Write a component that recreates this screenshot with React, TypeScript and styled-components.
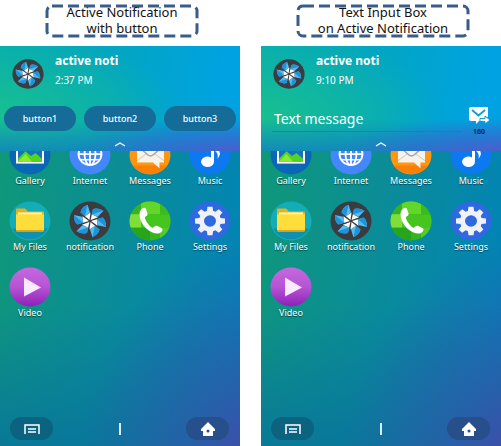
import React from 'react';
import styled, { createGlobalStyle } from 'styled-components';

const Global = createGlobalStyle`
  *, *::before, *::after { box-sizing: border-box; }
  body { margin: 0; background: #fff; font-family: "Noto Sans", "Open Sans", sans-serif; }
`;

const Page = styled.main`
  display: grid;
  grid-template-columns: 1fr 1fr;
  column-gap: 21px;
  min-height: 100vh;
`;

const Example = styled.section`
  display: flex;
  flex-direction: column;
`;

const CaptionRow = styled.header<{ $inset: number }>`
  display: flex;
  height: 46px;
  padding: 4px 0 9px ${p => p.$inset}px;
`;

const Caption = styled.h2<{ $width: number }>`
  position: relative;
  width: ${p => p.$width}px;
  margin: 0;
  color: #111;
  font-size: 13px;
  font-weight: 400;
  line-height: 16px;
  text-align: center;
  white-space: pre-line;
`;

const Dashes = styled.svg`
  position: absolute;
  inset: 0;
  width: 100%;
  height: 100%;
  overflow: visible;
`;

const CaptionText = styled.span`
  position: relative;
`;

const Phone = styled.div`
  position: relative;
  flex: 1;
  display: flex;
  flex-direction: column;
  overflow: hidden;
  color: #fff;
  background:
    radial-gradient(ellipse 75% 60% at 108% 108%, #4a45ac 0%, rgba(60, 80, 172, 0.6) 40%, rgba(20, 110, 180, 0) 100%),
    linear-gradient(to bottom, rgba(8, 115, 155, 0) 65%, #08739b 108%),
    linear-gradient(100deg, #109a74 0%, #0b8c98 48%, #0083b8 95%);
`;

const Notification = styled.section`
  position: absolute;
  top: 0;
  left: 0;
  right: 0;
  height: 105px;
  display: flex;
  flex-direction: column;
  background:
    radial-gradient(ellipse 80% 38% at 106% 106%, #5a55cf 0%, rgba(70, 95, 210, 0.6) 45%, rgba(40, 130, 215, 0) 100%),
    linear-gradient(to bottom, rgba(20, 125, 190, 0) 70%, rgba(20, 125, 190, 0.75) 100%),
    radial-gradient(ellipse 75% 80% at 0% 66%, #18bf90 0%, rgba(14, 178, 170, 0) 100%),
    linear-gradient(100deg, #06acb0 0%, #02a5c4 50%, #00a2e2 90%);
`;

const NotiHead = styled.div`
  display: flex;
  gap: 11px;
  height: 60px;
  padding: 6px 12px 0;
`;

const NotiIcon = styled.svg`
  width: 32px;
  height: 30px;
  margin-top: 7px;
`;

const NotiTitle = styled.h3`
  margin: 0;
  font-size: 12px;
  line-height: 18px;
  font-weight: 700;
`;

const NotiTime = styled.time`
  display: block;
  font-size: 10px;
  line-height: 20px;
`;

const ButtonRow = styled.div`
  display: grid;
  grid-template-columns: repeat(3, 1fr);
  gap: 8px;
  padding: 0 4px;
`;

const ActionButton = styled.button`
  height: 25px;
  padding: 0;
  border: 0;
  border-radius: 13px;
  background: #156c98;
  color: #fff;
  font: 500 9px/25px "Noto Sans", sans-serif;
`;

const InputRow = styled.form`
  display: flex;
  gap: 4px;
  padding: 0 9px 0 11px;
`;

const MessageInput = styled.input`
  flex: 1;
  min-width: 0;
  height: 26px;
  padding: 0 2px;
  border: 0;
  border-bottom: 1px solid #1685b4;
  outline: 0;
  background: none;
  color: #fff;
  font: 14px/20px "Noto Sans", sans-serif;
  &::placeholder { color: #fff; opacity: 1; }
`;

const SendButton = styled.button`
  display: flex;
  flex-direction: column;
  align-items: center;
  justify-content: flex-start;
  gap: 2px;
  width: 26px;
  height: 32px;
  padding: 0;
  border: 0;
  background: none;
  color: #06202c;
  font: 600 7px/10px "Noto Sans", sans-serif;
  svg { width: 22px; height: 19px; }
`;

const Collapse = styled.button`
  position: absolute;
  bottom: 0;
  left: 50%;
  width: 24px;
  height: 12px;
  margin-left: -12px;
  padding: 0;
  border: 0;
  background: none;
  svg { display: block; width: 24px; height: 12px; }
`;

const AppGrid = styled.ul`
  flex: 1;
  display: grid;
  grid-template-columns: repeat(4, 1fr);
  grid-auto-rows: 66px;
  margin: 0;
  padding: 89px 0 0;
  list-style: none;
`;

const AppLink = styled.a`
  display: flex;
  flex-direction: column;
  align-items: center;
  color: #fff;
  font-size: 9px;
  line-height: 11px;
  text-decoration: none;
  text-shadow: 0 1px 1px rgba(0, 30, 40, 0.7);
  svg { width: 42px; height: 40px; }
`;

const NavBar = styled.nav`
  display: flex;
  align-items: center;
  justify-content: space-between;
  padding: 0 11px 6px 10px;
`;

const NavButton = styled.button<{ $tone: string }>`
  display: grid;
  place-items: center;
  width: 43px;
  height: 23px;
  padding: 0;
  border: 0;
  border-radius: 12px;
  background: ${p => p.$tone};
  svg { width: 18px; height: 16px; }
`;

const Divider = styled.span`
  width: 2px;
  height: 12px;
  background: #d9eef5;
`;

const blades = [0, 60, 120, 180, 240, 300];

function Pinwheel() {
  return (
    <>
      <circle cx="21" cy="21" r="20.5" fill="#3b3c3f" />
      {blades.map(a => (
        <g key={a} transform={`rotate(${a} 21 21)`}>
          <path d="M18.500 4L21 12L16 16L11.500 12Q12.500 7 18.500 4Z" fill="#4fbcf4" />
          <path d="M18.500 4Q12.500 7 11.500 12L16 16Z" fill="#1f93da" />
          <path d="M20.500 20L16 16L21.500 12Z" fill="#fff" />
        </g>
      ))}
    </>
  );
}

function Gallery() {
  return (
    <>
      <circle cx="21" cy="21" r="20.500" fill="#0967b5" />
      <path d="M7 9H35V30H7Z" fill="#fff" />
      <path d="M9 11H33V28H9Z" fill="#176fc6" />
      <path d="M9 25L16.500 17L22 22L26.500 19L33 25V28H9Z" fill="#52d51f" />
      <path d="M9 28L16.500 20L23 28Z" fill="#8aeb32" />
      <circle cx="27.500" cy="15" r="2" fill="#f5d53a" />
    </>
  );
}

function Internet() {
  return (
    <>
      <circle cx="21" cy="21" r="20.500" fill="#4387fb" />
      <g fill="none" stroke="#fff" strokeWidth="1.800">
        <circle cx="21" cy="20" r="11.500" />
        <ellipse cx="21" cy="20" rx="5.500" ry="11.500" />
        <path d="M21 8.500V31.500M9.500 20H32.500M11.500 14H30.500M11.500 26H30.500" />
      </g>
    </>
  );
}

function Messages() {
  return (
    <>
      <circle cx="21" cy="21" r="20.500" fill="#ff960d" />
      <path d="M4 32A20.500 20.500 0 0 0 38 32Z" fill="#f97f05" />
      <path d="M8 10H35V29H30.500V35L24 29H8Z" fill="#f6f2ec" />
      <path d="M8 11L19 21Q21.500 23 24 21L35 11" fill="none" stroke="#aaa198" strokeWidth="1.500" />
      <path d="M8 27L17 20M35 27L26 20" fill="none" stroke="#d0c8be" strokeWidth="1" />
    </>
  );
}

function Music() {
  return (
    <>
      <circle cx="21" cy="21" r="20.500" fill="#0d78ef" />
      <path d="M22 7H25V28A6.500 5.500 0 1 1 22 23.500Z" fill="#fff" />
      <path d="M25 7Q26 13 29 15Q33 19 28.500 25Q30 19 25 16Z" fill="#fff" />
    </>
  );
}

function Files() {
  return (
    <>
      <circle cx="21" cy="21" r="20.500" fill="#13adb8" />
      <path d="M3 29A20 20 0 0 0 39 29Z" fill="#108fae" />
      <path d="M7 9Q7 8 8 8H16L19 11H34Q35 11 35 12V31H7Z" fill="#e3b223" />
      <path d="M9 12H33V16H9Z" fill="#fff5bd" />
      <path d="M7 14H35V31Q35 32 34 32H8Q7 32 7 31Z" fill="#ffdd3b" />
      <path d="M7 31H35" stroke="#d5a81e" strokeWidth="1" />
    </>
  );
}

function PhoneIcon({ id }: { id: string }) {
  return (
    <>
      <clipPath id={id}><circle cx="21" cy="21" r="20.500" /></clipPath>
      <g clipPath={`url(#${id})`}>
        <path d="M0 0H42V42H0Z" fill="#35b51d" />
        <path d="M12 0H31V14H12Z" fill="#63d62a" />
        <path d="M0 14H12V28H0Z" fill="#80de3b" />
        <path d="M12 14H42V28H12Z" fill="#46c51f" />
        <path d="M31 0H42V14H31Z" fill="#3dba20" />
        <path d="M0 28H21V42H0Z" fill="#28a41d" />
        <path d="M31 28H42V42H31Z" fill="#55cb25" />
      </g>
      <path d="M15 7Q11 8 10.500 13Q10.500 22 17 28.500Q24 35 30 34Q33 33 33.500 30.500Q34 29 32 28L28 26Q26 25.500 24.500 27.500Q23.500 29 21 26.500Q17 22.500 16 18.500Q15.500 16.500 17 16Q19 15 18.500 13L17 8.500Q16.500 7 15 7Z" fill="#fff" />
    </>
  );
}

const teeth = [0, 45, 90, 135, 180, 225, 270, 315];

function Settings() {
  return (
    <>
      <circle cx="21" cy="21" r="20.500" fill="#2f69df" />
      {teeth.map(a => (
        <path key={a} d="M18.500 6H23.500L24.500 13H17.500Z" fill="#f0f2f7" transform={`rotate(${a} 21 21)`} />
      ))}
      <circle cx="21" cy="21" r="8.500" fill="none" stroke="#f0f2f7" strokeWidth="5" />
    </>
  );
}

function Video({ id }: { id: string }) {
  return (
    <>
      <linearGradient id={id} x1="0" y1="0" x2="0" y2="1">
        <stop offset="0" stopColor="#c569df" />
        <stop offset="0.500" stopColor="#b654d4" />
        <stop offset="1" stopColor="#8d20b8" />
      </linearGradient>
      <circle cx="21" cy="21" r="20.500" fill={`url(#${id})`} />
      <path d="M15 11L32 21.500L15 31Z" fill="#fbeaff" />
    </>
  );
}

function HomeScreen({ name, time, children }: { name: string; time: string; children: React.ReactNode }) {
  const apps: [string, React.ReactNode][] = [
    ['Gallery', <Gallery />],
    ['Internet', <Internet />],
    ['Messages', <Messages />],
    ['Music', <Music />],
    ['My Files', <Files />],
    ['notification', <Pinwheel />],
    ['Phone', <PhoneIcon id={`${name}-phone`} />],
    ['Settings', <Settings />],
    ['Video', <Video id={`${name}-video`} />],
  ];
  return (
    <Phone>
      <AppGrid>
        {apps.map(([label, icon]) => (
          <li key={label}>
            <AppLink href="#">
              <svg viewBox="0 0 42 42" preserveAspectRatio="none" aria-hidden="true">{icon}</svg>
              {label}
            </AppLink>
          </li>
        ))}
      </AppGrid>
      <NavBar>
        <NavButton $tone="#0c637f" aria-label="Menu">
          <svg viewBox="0 0 18 16" fill="none" stroke="#fff">
            <path d="M2 13V4H16V13" strokeWidth="1.500" />
            <path d="M5 8H13M5 11H13" strokeWidth="1.500" />
          </svg>
        </NavButton>
        <Divider />
        <NavButton $tone="#264f8b" aria-label="Home">
          <svg viewBox="0 0 18 16"><path d="M9 1L16 8V10H14V15H4V10H2V8Z" fill="#fff" /><circle cx="9" cy="10" r="1.500" fill="#264f8b" /></svg>
        </NavButton>
      </NavBar>
      <Notification>
        <NotiHead>
          <NotiIcon viewBox="0 0 42 42" preserveAspectRatio="none" aria-hidden="true"><Pinwheel /></NotiIcon>
          <div>
            <NotiTitle>active noti</NotiTitle>
            <NotiTime>{time}</NotiTime>
          </div>
        </NotiHead>
        {children}
        <Collapse aria-label="Collapse">
          <svg viewBox="0 0 24 12" fill="none" stroke="#fff" strokeWidth="1.200"><path d="M7 7L12 4L17 7" /></svg>
        </Collapse>
      </Notification>
    </Phone>
  );
}

function Label({ width, children }: { width: number; children: React.ReactNode }) {
  return (
    <Caption $width={width}>
      <Dashes aria-hidden="true">
        <rect x="2" y="2" width={width - 4} height="30" rx="5" fill="none" stroke="#385d8a" strokeWidth="3" strokeDasharray="11 5" />
      </Dashes>
      <CaptionText>{children}</CaptionText>
    </Caption>
  );
}

export default function App() {
  return (
    <>
      <Global />
      <Page>
        <Example>
          <CaptionRow $inset={45}>
            <Label width={154}>{'Active Notification\nwith button'}</Label>
          </CaptionRow>
          <HomeScreen name="buttons" time="2:37 PM">
            <ButtonRow>
              <ActionButton>button1</ActionButton>
              <ActionButton>button2</ActionButton>
              <ActionButton>button3</ActionButton>
            </ButtonRow>
          </HomeScreen>
        </Example>
        <Example>
          <CaptionRow $inset={35}>
            <Label width={174}>{'Text Input Box\non Active Notification'}</Label>
          </CaptionRow>
          <HomeScreen name="text" time="9:10 PM">
            <InputRow onSubmit={e => e.preventDefault()}>
              <MessageInput aria-label="Text message" placeholder="Text message" />
              <SendButton aria-label="Send, 160 characters left">
                <svg viewBox="0 0 22 19">
                  <path d="M3 1H20V11H17V15H11L8 18V15H3Q1 15 1 13V3Q1 1 3 1Z" fill="#fff" />
                  <path d="M4 4L10.500 9.500L17 4" fill="none" stroke="#0e9fcb" strokeWidth="1.800" />
                  <path d="M12 12.500H17V10L22 14L17 18V15.500H12Z" fill="#fff" stroke="#0e9fcb" strokeWidth="1" />
                </svg>
                160
              </SendButton>
            </InputRow>
          </HomeScreen>
        </Example>
      </Page>
    </>
  );
}
